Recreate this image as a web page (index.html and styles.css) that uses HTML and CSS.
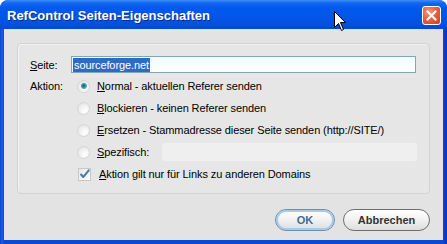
FILE: index.html
```html
<!DOCTYPE html>
<html>
<head>
<meta charset="utf-8">
<link rel="stylesheet" href="styles.css">
</head>
<body>
<div class="window">
  <div class="titlebar">
    <span class="title">RefControl Seiten-Eigenschaften</span>
    <span class="close"><svg width="11" height="11" viewBox="0 0 11 11"><path d="M1.5 1.5 L9.5 9.5 M9.5 1.5 L1.5 9.5" stroke="#fff" stroke-width="2" stroke-linecap="square"/></svg></span>
  </div>
  <div class="body">
    <div class="group">
      <div class="row first">
        <span class="label"><u>S</u>eite:</span>
        <span class="input"><span class="sel">sourceforge.net</span></span>
      </div>
      <div class="row">
        <span class="label">Aktion:</span>
        <span class="opt"><span class="radio on"></span><span><u>N</u>ormal - aktuellen Referer senden</span></span>
      </div>
      <div class="row">
        <span class="label"></span>
        <span class="opt"><span class="radio"></span><span><u>B</u>lockieren - keinen Referer senden</span></span>
      </div>
      <div class="row">
        <span class="label"></span>
        <span class="opt"><span class="radio"></span><span><u>E</u>rsetzen - Stammadresse dieser Seite senden (http://SITE/)</span></span>
      </div>
      <div class="row">
        <span class="label"></span>
        <span class="opt"><span class="radio"></span><span class="spez"><u>S</u>pezifisch:</span><span class="input disabled"></span></span>
      </div>
      <div class="row">
        <span class="label"></span>
        <span class="opt"><span class="check"><svg width="13" height="13" viewBox="0 0 13 13"><path d="M2.5 6.5 L5 9.5 L11.5 1.5" fill="none" stroke="#3b7fae" stroke-width="2.4" stroke-linecap="round" stroke-linejoin="round"/></svg></span><span class="chk-text"><u>A</u>ktion gilt nur für Links zu anderen Domains</span></span>
      </div>
    </div>
    <div class="buttons">
      <span class="btn default">OK</span>
      <span class="btn">Abbrechen</span>
    </div>
  </div>
  <svg class="cursor" width="13" height="21" viewBox="0 0 13 21"><path d="M0.5 0.5 L0.5 16.5 L4.5 12.5 L7.5 19.5 L9.5 18.5 L6.5 11.5 L11.5 11.5 Z" fill="#fff" stroke="#000" stroke-width="1"/></svg>
</div>
</body>
</html>
```
FILE: styles.css
```css
html, body {
  margin: 0;
  padding: 0;
  background: #ffffff;
}
body {
  font-family: "Liberation Sans", Arial, sans-serif;
  font-size: 11px;
  letter-spacing: -0.1px;
  color: #000;
}
.window {
  position: relative;
  width: 447px;
  height: 244px;
  box-sizing: border-box;
  background: linear-gradient(to right, #0842c8 0, #1d5fe6 2px, #0a48d6 4px, #0a48d6 calc(100% - 4px), #0535b8 100%);
  border-radius: 8px 8px 0 0;
  padding: 0 4px 4px 4px;
  display: flex;
  flex-direction: column;
  overflow: hidden;
}
.titlebar {
  height: 29px;
  margin: 0 -4px;
  padding: 0 6px 0 7px;
  display: flex;
  align-items: center;
  background: linear-gradient(to bottom, #3b8ff8 0, #1466ef 3px, #0058ee 8px, #0455e6 18px, #0450dd 25px, #0547cf 29px);
  border-radius: 8px 8px 0 0;
}
.title {
  color: #fff;
  font-family: "Liberation Sans", Arial, sans-serif;
  font-weight: bold;
  font-size: 13px;
  letter-spacing: 0;
  text-shadow: 1px 1px 0 #0a2f8a;
  padding-top: 1px;
}
.close {
  margin-left: auto;
  width: 19px;
  height: 19px;
  box-sizing: border-box;
  border: 1px solid #fff;
  border-radius: 3px;
  background: radial-gradient(circle at 35% 30%, #f19a7a 0, #e4643e 45%, #c6401c 100%);
  display: flex;
  align-items: center;
  justify-content: center;
  margin-top: 1px;
}
.body {
  flex: 1;
  background: #e3e3e3;
  padding: 14px 13px 0 13px;
  display: flex;
  flex-direction: column;
}
.group {
  height: 151px;
  box-sizing: border-box;
  border: 1px solid #d3d3d3;
  border-radius: 4px;
  background: #e6e6e6;
  box-shadow: inset 1px 1px 0 #f2f2f2;
  padding: 12px 0 0 12px;
}
.row {
  display: flex;
  align-items: center;
  height: 22px;
}
.row.first {
  height: 17px;
  margin-bottom: 2px;
}
.label {
  width: 41px;
  flex: none;
}
.input {
  width: 345px;
  height: 17px;
  box-sizing: border-box;
  border: 1px solid #7fa9b9;
  background: linear-gradient(to bottom, #f2fbfd, #ffffff);
  display: flex;
  align-items: center;
  padding-left: 1px;
}
.sel {
  background: #316ac5;
  color: #fff;
  padding: 0 1px;
  line-height: 14px;
}
.opt {
  display: flex;
  align-items: center;
  margin-left: 6px;
}
.radio {
  width: 13px;
  height: 13px;
  box-sizing: border-box;
  border-radius: 50%;
  border: 1px solid #d6d6d6;
  background: radial-gradient(circle at 65% 70%, #ffffff 0, #f4f4f4 40%, #dcdcdc 100%);
  margin-right: 7px;
  position: relative;
}
.radio.on::after {
  content: "";
  position: absolute;
  left: 2.5px;
  top: 2.5px;
  width: 6px;
  height: 6px;
  border-radius: 50%;
  background: radial-gradient(circle at 45% 45%, #1f5a66 0, #3aa0ae 50%, #a8e0e6 100%);
}
.spez {
  width: 65px;
}
.input.disabled {
  width: 255px;
  height: 18px;
  border: none;
  border-radius: 2px;
  background: #efefef;
}
.check {
  width: 13px;
  height: 13px;
  box-sizing: border-box;
  border: 1px solid #c8c8c8;
  background: linear-gradient(135deg, #e8e8e8, #ffffff);
  margin-left: 1px;
  margin-right: 8px;
  display: flex;
  align-items: center;
  justify-content: center;
}
.buttons {
  display: flex;
  justify-content: flex-end;
  gap: 8px;
  margin-top: 15px;
  padding-right: 0;
}
.btn {
  height: 22px;
  box-sizing: border-box;
  border: 1px solid #6f6f6f;
  border-radius: 11px;
  background: linear-gradient(to bottom, #ffffff 0, #f4f4f4 40%, #dedede 100%);
  display: flex;
  align-items: center;
  justify-content: center;
  font-weight: bold;
  color: #333;
  font-size: 11px;
  letter-spacing: 0;
}
.btn.default {
  width: 60px;
  border-color: #6a8fb5;
  box-shadow: inset 0 0 0 2px #a9cbe8;
  color: #3f6b94;
}
.btn:not(.default) {
  width: 87px;
}
.cursor {
  position: absolute;
  left: 334px;
  top: 11px;
}
```
